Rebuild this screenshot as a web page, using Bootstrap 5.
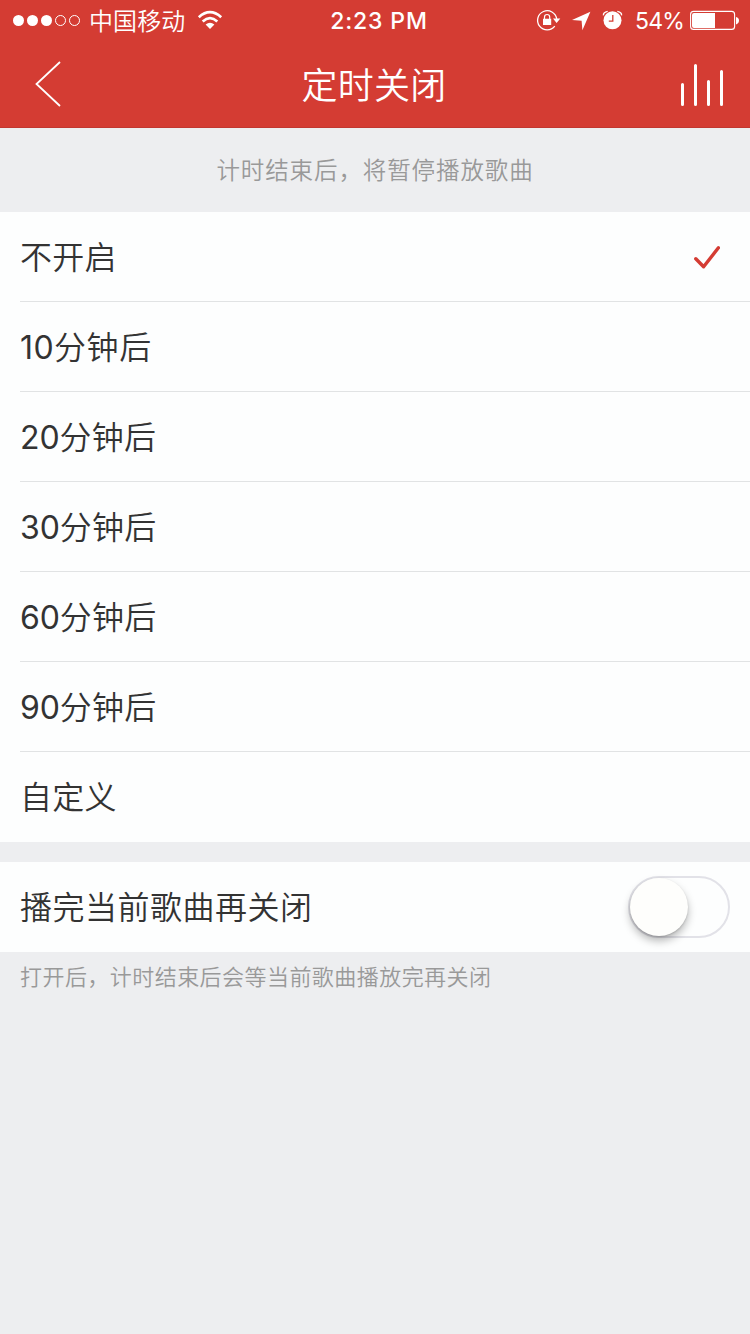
<!DOCTYPE html>
<html lang="zh-CN">
<head>
<meta charset="utf-8">
<meta name="viewport" content="width=device-width, initial-scale=1">
<title>定时关闭</title>
<link href="https://cdn.jsdelivr.net/npm/bootstrap@5.3.0/dist/css/bootstrap.min.css" rel="stylesheet">
<style>
body{background:#edeef0;color:#333;font-family:Inter,"Noto Sans CJK SC",sans-serif;min-height:1334px;overflow:hidden}
svg{display:block;flex:none}
.top-area{background:#d43c33;height:128px;border-bottom:1px solid #c23730;color:#fff}
.status{height:40px;padding-left:13px;padding-right:11px}
.side{flex:1 1 0}
.carrier{font-size:24px;line-height:40px;margin-left:9px;margin-right:12px;padding-top:3px;font-weight:350;letter-spacing:.1px}
.clock{font-size:23px;line-height:40px;font-weight:500;letter-spacing:.85px;padding-top:2px;margin-left:6px}
.percent{font-size:23px;line-height:40px;letter-spacing:-.8px;padding-top:2px;margin-left:10px;margin-right:6px}
.titlebar{height:88px;padding-left:35px;padding-right:26px}
.titlebar h1{font-size:36px;line-height:88px;padding-top:3px;margin-right:11px;font-weight:350;letter-spacing:.2px}
.hint{height:84px;line-height:85px;font-size:23.5px;letter-spacing:.9px;color:#999;font-weight:350}
.options{--bs-list-group-bg:#fdfefe;background:#fdfefe}
.option{height:90px;margin-left:20px;padding:0 30px 0 0;border:0;border-bottom:1px solid #e1e3e4;background:transparent;color:#333;font-size:32px;font-weight:350;line-height:92px}
.option:last-child{border-bottom:0}
.option-text{letter-spacing:.2px}
.option-first{padding-top:2px}
.option-ten{letter-spacing:.6px}
.digits{font-weight:400;letter-spacing:-.1px}
.option-ten .digits{letter-spacing:.4px}
.after{height:90px;margin-top:20px;padding:0 20px;background:#fdfefe;font-size:32px;line-height:90px;letter-spacing:.5px;font-weight:350}
.after-label{padding-top:2px}
.toggle{width:102px;height:62px;border:2px solid #e2e2e8;border-radius:31px;background:#fdfefe}
.knob{width:58px;height:58px;border-radius:50%;background:#fefefc;box-shadow:0 5px 8px rgba(0,0,0,.28),0 1px 2px rgba(0,0,0,.15)}
.note{padding-left:20px;font-size:22px;line-height:50px;letter-spacing:.45px;color:#999;font-weight:350}
</style>
</head>
<body>
<header class="top-area">
  <div class="status d-flex align-items-center">
    <div class="side d-flex align-items-center">
      <svg width="67" height="12" viewBox="0 0 67 12"><g fill="#fff"><circle cx="5.5" cy="6.5" r="5.5"/><circle cx="19.5" cy="6.5" r="5.5"/><circle cx="33.5" cy="6.5" r="5.5"/></g><g fill="none" stroke="#fff"><circle cx="47.5" cy="6.5" r="5"/><circle cx="61.5" cy="6.5" r="5"/></g></svg>
      <span class="carrier">中国移动</span>
      <svg width="26" height="20" viewBox="0 0 26 20"><g fill="none" stroke="#fff" stroke-width="2.7"><path d="M1.8 7.2Q13-2.9 24.2 7.2"/><path d="M5.7 11.4Q13 4.8 20.3 11.4"/></g><path d="M8.6 14.5Q13 10.9 17.4 14.5L13 19Z" fill="#fff"/></svg>
    </div>
    <div class="clock">2:23 PM</div>
    <div class="side d-flex align-items-center justify-content-end">
      <svg width="90" height="24" viewBox="535 8 90 24">
        <path d="M554.8 26.2A9.6 9.6 0 1 1 556.7 19" fill="none" stroke="#fff" stroke-width="1.3"/>
        <path d="M553 18.6h7.3l-3.7 4.4zM543 18.7h8.2v6.2H543z" fill="#fff"/><path d="M544.5 19v-1.9a2.6 2.6 0 0 1 5.2 0V19" fill="none" stroke="#fff" stroke-width="1.2"/>
        <path d="M590.4 11.8 582.4 30.2 581.6 20.7 572 20Z" fill="#fff"/>
        <circle cx="612.5" cy="20.3" r="9" fill="#fff"/><path d="M603.5 15.3q-.5-3 4.2-3.9M621.5 15.3q.5-3-4.2-3.9" fill="none" stroke="#fff" stroke-width="1.4"/><path d="M612.8 15v6.1h-4" fill="none" stroke="#d43c33" stroke-width="1.3"/>
      </svg>
      <span class="percent">54%</span>
      <svg width="49" height="20" viewBox="0 0 49 20"><rect x=".6" y="1.4" width="44" height="18" rx="3" fill="none" stroke="#fff" stroke-width="1.1"/><path d="M4 3h21v15H4q-2 0-2-2V5q0-2 2-2zM46 7q3 .7 3 3.6t-3 3.9z" fill="#fff"/></svg>
    </div>
  </div>
  <nav class="titlebar d-flex align-items-center justify-content-between">
    <div class="side"><svg width="27" height="46" viewBox="0 0 27 46"><path d="M25 1 1.5 23 25 45" fill="none" stroke="#fff" stroke-width="1.8"/></svg></div>
    <h1 class="mb-0">定时关闭</h1>
    <div class="side d-flex justify-content-end"><svg width="43" height="44" viewBox="0 0 43 44"><path d="M1.5 22.5v20M14.5 3.5v39M27.5 19.5v23M40.5 9.5v33" stroke="#fff" stroke-width="3" stroke-linecap="round"/></svg></div>
  </nav>
</header>
<main>
  <div class="hint text-center">计时结束后，将暂停播放歌曲</div>
  <div class="options list-group list-group-flush">
    <div class="option list-group-item d-flex align-items-center justify-content-between"><span class="option-text option-first">不开启</span><svg width="26" height="24" viewBox="0 0 26 24"><path d="M1.8 13.8 9.6 21.8 24.4 2.8" fill="none" stroke="#d43c33" stroke-width="3.4" stroke-linecap="round" stroke-linejoin="round"/></svg></div>
    <div class="option list-group-item"><span class="option-ten"><span class="digits">10</span>分钟后</span></div>
    <div class="option list-group-item"><span class="option-text"><span class="digits">20</span>分钟后</span></div>
    <div class="option list-group-item"><span class="option-text"><span class="digits">30</span>分钟后</span></div>
    <div class="option list-group-item"><span class="option-text"><span class="digits">60</span>分钟后</span></div>
    <div class="option list-group-item"><span class="option-text"><span class="digits">90</span>分钟后</span></div>
    <div class="option list-group-item"><span class="option-text">自定义</span></div>
  </div>
  <div class="after d-flex align-items-center justify-content-between"><span class="after-label">播完当前歌曲再关闭</span><div class="toggle" role="switch" aria-checked="false"><div class="knob"></div></div></div>
  <div class="note">打开后，计时结束后会等当前歌曲播放完再关闭</div>
</main>
<script src="https://cdn.jsdelivr.net/npm/bootstrap@5.3.0/dist/js/bootstrap.bundle.min.js"></script>
</body>
</html>
